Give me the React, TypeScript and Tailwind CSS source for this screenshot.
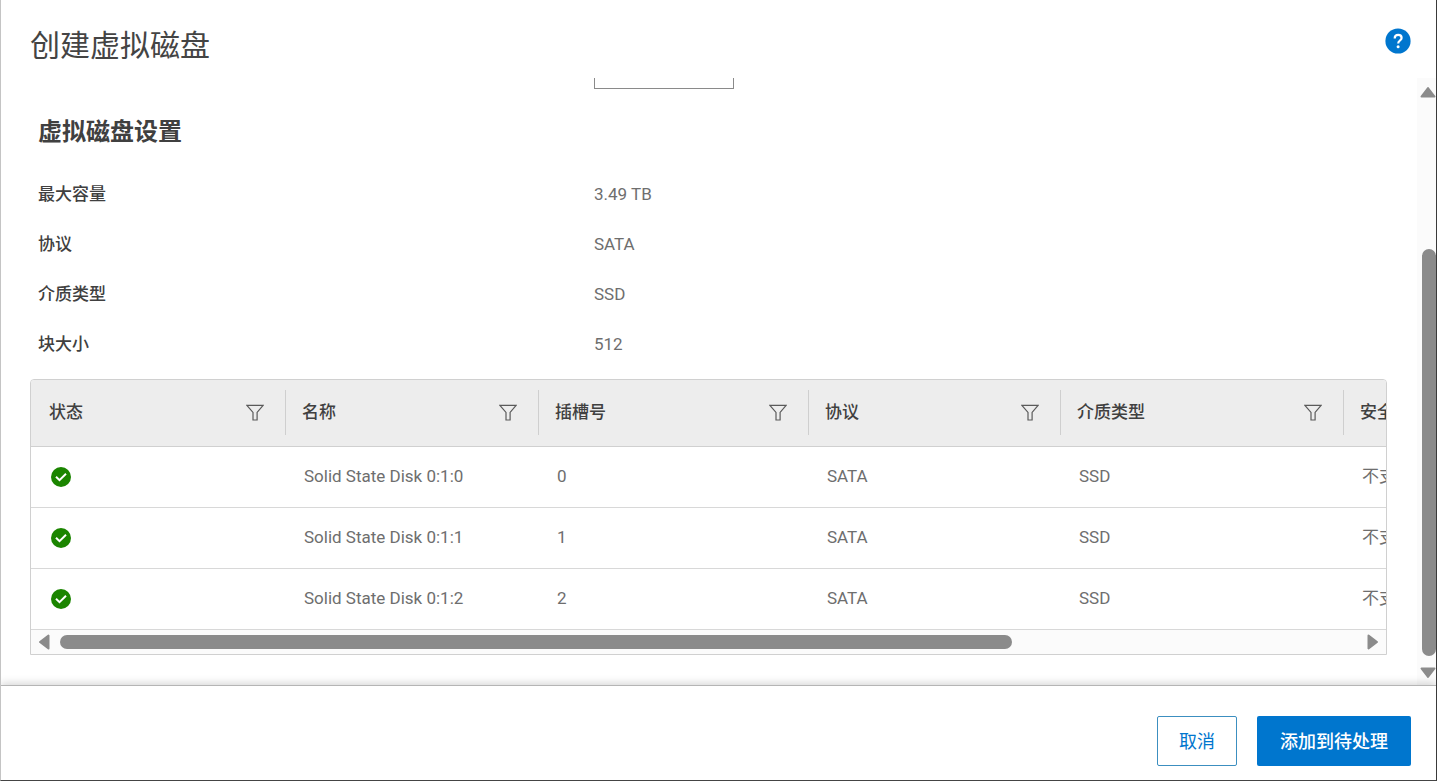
import { useState } from "react";

const settings = [
  { label: "最大容量", value: "3.49 TB" },
  { label: "协议", value: "SATA" },
  { label: "介质类型", value: "SSD" },
  { label: "块大小", value: "512" },
];

const columns = [
  { title: "状态", width: "w-[255px]" },
  { title: "名称", width: "w-[253px]" },
  { title: "插槽号", width: "w-[270px]" },
  { title: "协议", width: "w-[252px]" },
  { title: "介质类型", width: "w-[283px]" },
  { title: "安全状态", width: "w-[253px]" },
];

const disks = [
  { name: "Solid State Disk 0:1:0", slot: 0, protocol: "SATA", media: "SSD", security: "不支持" },
  { name: "Solid State Disk 0:1:1", slot: 1, protocol: "SATA", media: "SSD", security: "不支持" },
  { name: "Solid State Disk 0:1:2", slot: 2, protocol: "SATA", media: "SSD", security: "不支持" },
];

function HelpIcon() {
  return (
    <svg viewBox="0 0 26 26" className="size-[26px]" aria-hidden="true">
      <circle cx="13" cy="13" r="12.6" fill="#0076ce" />
      <path
        d="M9.7 10.4c0-2.2 1.4-3.5 3.5-3.5 2 0 3.4 1.2 3.4 3 0 2.6-3.4 2.7-3.4 5.6"
        fill="none"
        stroke="#fff"
        strokeWidth="2.2"
      />
      <circle cx="13.1" cy="18.8" r="1.5" fill="#fff" />
    </svg>
  );
}

function FilterIcon() {
  return (
    <svg viewBox="0 0 18 18" className="h-[18px] w-[18px]" aria-hidden="true">
      <path d="M0.9 1.4h16.2l-6 7v7.6H7V8.4z" fill="none" stroke="#5a5a5a" strokeWidth="1.2" />
    </svg>
  );
}

function OkIcon() {
  return (
    <svg viewBox="0 0 20 20" className="size-5" role="img" aria-label="OK">
      <circle cx="10" cy="10" r="10" fill="#1b8500" />
      <path d="M5 9.8l3.5 3.4 6.5-6.4" fill="none" stroke="#fff" strokeWidth="2" />
    </svg>
  );
}

function Arrow({ className }: { className: string }) {
  return (
    <svg viewBox="0 0 16 12" className={className} aria-hidden="true">
      <path d="M8 2L14.5 10.5H1.5z" fill="#8b8b8b" stroke="#8b8b8b" strokeWidth="2" strokeLinejoin="round" />
    </svg>
  );
}

export default function App() {
  const [size, setSize] = useState("");

  return (
    <div className="flex h-screen flex-col overflow-hidden border-r border-b border-l border-r-[#3a3a3a] border-b-[#444] border-l-[#c4c4c4] bg-white font-['Roboto','Noto_Sans_CJK_SC',sans-serif] text-[#6e6e6e]">
      <header className="flex h-[78px] shrink-0 items-start justify-between pt-7 pr-[25px] pl-[29px]">
        <h1 className="text-[30px] leading-9 text-[#444]">创建虚拟磁盘</h1>
        <button type="button" aria-label="帮助" className="cursor-pointer">
          <HelpIcon />
        </button>
      </header>

      <div className="flex min-h-0 flex-1">
        <main className="min-w-0 flex-1 overflow-hidden pr-[30px] pl-[29px]">
          <div className="-mt-[29px] flex pl-[564px]">
            <input
              aria-label="容量"
              value={size}
              onChange={(e) => setSize(e.target.value)}
              className="h-10 w-[140px] border border-[#8a8a8a] px-2 text-[17px] outline-none"
            />
          </div>

          <h2 className="mt-[25px] pl-2 text-[24px] leading-9 font-bold text-[#404040]">虚拟磁盘设置</h2>

          <dl className="mt-5 pl-2 text-[17px]">
            {settings.map((s) => (
              <div key={s.label} className="flex h-[50px] items-center">
                <dt className="w-[556px] font-medium text-[#404040]">{s.label}</dt>
                <dd>{s.value}</dd>
              </div>
            ))}
          </dl>

          <div className="mt-[9px] overflow-hidden rounded-t border border-[#d0d0d0]">
            <table className="w-[1566px] table-fixed border-collapse text-left text-[17px] whitespace-nowrap">
              <thead className="bg-[#ededed]">
                <tr className="h-[66px] border-b border-[#d0d0d0]">
                  {columns.map((c) => (
                    <th key={c.title} className={`${c.width} group p-0 font-medium text-[#404040]`}>
                      <div className="flex h-[45px] items-center justify-between border-r border-[#cfcfcf] pr-[21px] pl-4 group-first:pl-[18px]">
                        {c.title}
                        <button type="button" aria-label={`筛选${c.title}`} className="cursor-pointer">
                          <FilterIcon />
                        </button>
                      </div>
                    </th>
                  ))}
                </tr>
              </thead>
              <tbody>
                {disks.map((d) => (
                  <tr key={d.slot} className="h-[61px] border-b border-[#d8d8d8]">
                    <td className="pl-5">
                      <OkIcon />
                    </td>
                    <td className="pl-[18px]">{d.name}</td>
                    <td className="pl-[18px]">{d.slot}</td>
                    <td className="pl-[18px]">{d.protocol}</td>
                    <td className="pl-[18px]">{d.media}</td>
                    <td className="pl-[18px]">{d.security}</td>
                  </tr>
                ))}
              </tbody>
            </table>
            <div className="flex h-6 items-center bg-[#fbfbfb] px-[5px]">
              <Arrow className="h-3 w-4 -rotate-90" />
              <div className="mx-2 flex-1">
                <div className="h-[14px] w-[73.4%] rounded-full bg-[#8b8b8b]" />
              </div>
              <Arrow className="h-3 w-4 rotate-90" />
            </div>
          </div>
        </main>

        <div className="flex w-[19px] shrink-0 flex-col items-end bg-[#fbfbfb] pt-2 pb-[6px]">
          <Arrow className="h-3 w-4" />
          <div className="flex flex-1 flex-col justify-end pb-[11px]">
            <div className="h-[73%] w-[14px] rounded-full bg-[#8b8b8b]" />
          </div>
          <Arrow className="h-3 w-4 rotate-180" />
        </div>
      </div>

      <footer className="flex h-[95px] shrink-0 items-start justify-end gap-5 border-t border-[#b5b5b5] bg-white pt-[30px] pr-[25px] text-[18px] shadow-[0_-2px_8px_rgba(0,0,0,0.16)]">
        <button
          type="button"
          className="h-[50px] w-20 cursor-pointer rounded-xs border border-[#3c8fc0] text-[#0076ce]"
        >
          取消
        </button>
        <button
          type="button"
          className="h-[50px] w-[154px] cursor-pointer rounded-xs bg-[#0076ce] font-medium text-white"
        >
          添加到待处理
        </button>
      </footer>
    </div>
  );
}
